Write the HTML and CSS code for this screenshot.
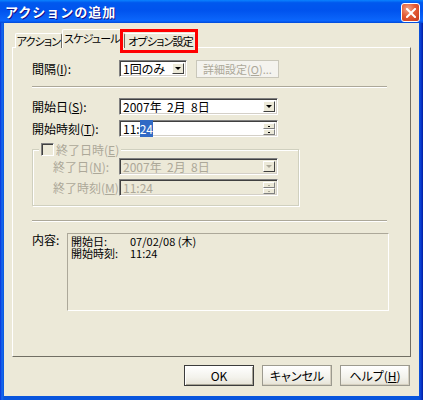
FILE: index.html
```html
<!DOCTYPE html>
<html lang="ja">
<head>
<meta charset="utf-8">
<title>アクションの追加</title>
<link rel="stylesheet" href="styles.css">
</head>
<body>
<div class="window">
  <div class="titlebar">
    <span class="title">アクションの追加</span>
    <span class="close">
      <svg width="10" height="10" viewBox="0 0 10 10"><path d="M1 1 L9 9 M9 1 L1 9" stroke="#fff" stroke-width="2" stroke-linecap="square"/></svg>
    </span>
  </div>
  <div class="client">
    <div class="tabs">
      <div class="tab t1">アクション</div>
      <div class="tab sel">スケジュール</div>
      <div class="tab t3">オプション設定<span class="mark"></span></div>
    </div>
    <div class="panel">
      <div class="row r1">
        <span class="lbl">間隔(<u>I</u>):</span>
        <div class="field interval">1回のみ<span class="dd"><i class="tri"></i></span></div>
        <span class="btn small dis">詳細設定(<u>O</u>)...</span>
      </div>
      <div class="sep s1"></div>
      <div class="row r2">
        <span class="lbl">開始日(<u>S</u>):</span>
        <div class="field wide">2007年&nbsp; 2月&nbsp; 8日<span class="dd"><i class="tri"></i></span></div>
      </div>
      <div class="row r3">
        <span class="lbl">開始時刻(<u>T</u>):</span>
        <div class="field wide">11:<span class="hl">24</span><span class="spin"><span class="sb"><i class="dot"></i></span><span class="sb"><i class="dot"></i></span></span></div>
      </div>
      <div class="group">
        <div class="legend"><span class="cb"></span><span class="gray">終了日時(<u>E</u>)</span></div>
        <div class="row g1">
          <span class="lbl glbl gray">終了日(<u>N</u>):</span>
          <div class="field wide disf">2007年&nbsp; 2月&nbsp; 8日<span class="dd"><i class="tri dtri"></i></span></div>
        </div>
        <div class="row g2">
          <span class="lbl glbl gray">終了時刻(<u>M</u>):</span>
          <div class="field wide disf">11:24<span class="spin"><span class="sb"><i class="dot ddot"></i></span><span class="sb"><i class="dot ddot"></i></span></span></div>
        </div>
      </div>
      <div class="sep s2"></div>
      <div class="row r4">
        <span class="lbl top">内容:</span>
        <div class="content">
          <span>開始日:</span><span>07/02/08 (木)</span>
          <span>開始時刻:</span><span>11:24</span>
        </div>
      </div>
    </div>
    <div class="buttons">
      <span class="btn big ok">OK</span>
      <span class="btn big">キャンセル</span>
      <span class="btn big">ヘルプ(<u>H</u>)</span>
    </div>
  </div>
</div>
</body>
</html>
```
FILE: styles.css
```css
html, body {
  margin: 0;
  padding: 0;
  background: #ffffff;
}
body {
  font-family: "Noto Sans CJK JP", "DejaVu Sans", sans-serif;
  font-size: 12px;
  font-feature-settings: "palt";
  color: #000;
}
u { text-decoration: underline; text-underline-offset: 1px; }

.window {
  width: 423px;
  height: 400px;
  display: flex;
  flex-direction: column;
  background: linear-gradient(to right, #0831D9 0, #166AEE 2px, #0855DD 4px, #0855DD 419px, #0A3ACF 421px, #001EA0 423px);
  overflow: hidden;
}
.titlebar {
  height: 23px;
  flex: none;
  display: flex;
  align-items: center;
  justify-content: space-between;
  padding: 0 3px 0 5px;
  background: linear-gradient(to bottom, #0A83FF 0%, #0058EE 12%, #0053EE 45%, #0962F8 80%, #0A66FF 90%, #0049D8 100%);
}
.title {
  color: #fff;
  font-weight: bold;
  font-size: 13px;
  line-height: 15px;
  font-feature-settings: normal;
  text-shadow: 1px 1px #0F1089;
  letter-spacing: 1px;
}
.close {
  width: 17px;
  height: 17px;
  margin-top: 2px;
  border: 1px solid #fff;
  border-radius: 3px;
  background: radial-gradient(circle at 35% 30%, #F2A58A 0%, #E35B35 45%, #C8381A 100%);
  display: flex;
  align-items: center;
  justify-content: center;
}

.client {
  flex: 1;
  margin: 0 4px 4px 4px;
  background: #ECE9D8;
  padding: 7px 8px 0 8px;
  display: flex;
  flex-direction: column;
}

.tabs {
  position: relative;
  display: flex;
  align-items: flex-end;
  height: 18px;
  margin-bottom: -1px;
  z-index: 1;
}
.tab {
  height: 15px;
  line-height: 14px;
  font-size: 11px;
  letter-spacing: -0.8px;
  background: #ECE9D8;
  border-top: 1px solid #fff;
  border-left: 1px solid #fff;
  border-right: 1px solid #716F64;
  border-radius: 2px 2px 0 0;
  box-sizing: border-box;
  white-space: nowrap;
  text-align: center;
  padding: 0;
}
.tab.t1 { margin-left: 3px; width: 47px; }
.tab.sel { height: 19px; line-height: 17px; width: 60px; border-right: 1px solid #ECE9D8; }
.tab.t3 { position: relative; margin-left: 2px; width: 74px; border-left: 1px solid #6B6A60; border-right: 2px solid #6B6A60; }
.mark {
  position: absolute;
  left: -5px;
  top: -5px;
  width: 72px;
  height: 18px;
  border: 3px solid #FF0000;
}

.panel {
  height: 310px;
  box-sizing: border-box;
  border-top: 1px solid #fff;
  border-left: 1px solid #fff;
  border-right: 1px solid #716F64;
  border-bottom: 1px solid #716F64;
  padding: 12px 0 0 19px;
  background: #ECE9D8;
}

.row {
  display: flex;
  align-items: center;
  height: 17px;
}
.lbl {
  width: 87px;
  flex: none;
  line-height: 14px;
  white-space: nowrap;
}
.field {
  position: relative;
  height: 17px;
  box-sizing: border-box;
  background: #fff;
  border-top: 1px solid #808080;
  border-left: 1px solid #808080;
  border-right: 1px solid #fff;
  border-bottom: 1px solid #fff;
  box-shadow: inset 1px 1px 0 #404040, inset -1px -1px 0 #D4D0C8;
  padding-left: 3px;
  line-height: 15px;
  white-space: nowrap;
  font-size: 12px;
}
.field.interval { width: 68px; }
.field.wide { width: 159px; }
.field.disf { background: #ECE9D8; color: #ACA899; }
.dd {
  position: absolute;
  right: 2px;
  top: 2px;
  width: 12px;
  height: 11px;
  background: #ECE9D8;
  border-top: 1px solid #fff;
  border-left: 1px solid #fff;
  border-right: 1px solid #404040;
  border-bottom: 1px solid #404040;
  box-sizing: border-box;
  display: flex;
  align-items: center;
  justify-content: center;
}
.tri {
  width: 0;
  height: 0;
  border-left: 3px solid transparent;
  border-right: 3px solid transparent;
  border-top: 3px solid #000;
}
.tri.dtri { border-top-color: #ACA899; }
.spin {
  position: absolute;
  right: 2px;
  top: 2px;
  width: 12px;
  height: 12px;
  display: flex;
  flex-direction: column;
}
.sb {
  flex: 1;
  background: #ECE9D8;
  border-top: 1px solid #fff;
  border-left: 1px solid #fff;
  border-right: 1px solid #808080;
  border-bottom: 1px solid #808080;
  display: flex;
  align-items: center;
  justify-content: center;
}
.dot { width: 2px; height: 1px; background: #000; }
.dot.ddot { background: #ACA899; }
.hl { background: #316AC5; color: #fff; }

.btn {
  display: inline-flex;
  align-items: center;
  justify-content: center;
  box-sizing: border-box;
  white-space: nowrap;
  background: linear-gradient(to bottom, #FFFFFF 0%, #F3F2EC 60%, #E6E3D6 100%);
  border: 1px solid #9C9A8F;
  box-shadow: inset -1px -1px 0 #D6D0C0;
  font-size: 12px;
}
.btn.small { width: 83px; height: 18px; margin-left: 9px; font-size: 11px; }
.btn.dis { color: #ACA899; background: #F4F3EE; border-color: #C9C7BA; box-shadow: none; }

.sep {
  width: 355px;
  height: 0;
  border-top: 1px solid #ACA899;
  border-bottom: 1px solid #fff;
}
.sep.s1 { margin-top: 9px; margin-bottom: 10px; }
.r3 { margin-top: 5px; }

.group {
  position: relative;
  width: 267px;
  height: 57px;
  box-sizing: border-box;
  margin-top: 12px;
  border: 1px solid #D0D0BF;
  box-shadow: inset 1px 1px 0 #fff, 1px 1px 0 #fff;
  padding: 8px 0 0 20px;
}
.legend {
  position: absolute;
  left: 6px;
  top: -7px;
  display: flex;
  align-items: center;
  background: #ECE9D8;
  padding: 0 2px;
  line-height: 13px;
}
.cb {
  width: 11px;
  height: 11px;
  margin-right: 2px;
  border-top: 1px solid #808080;
  border-left: 1px solid #808080;
  border-right: 1px solid #fff;
  border-bottom: 1px solid #fff;
  box-shadow: inset 1px 1px 0 #404040;
  background: #ECE9D8;
}
.gray { color: #ACA899; }
.glbl { width: 66px; }
.g2 { margin-top: 4px; }

.sep.s2 { margin-top: 14px; }
.r4 { margin-top: 11px; height: auto; align-items: flex-start; }
.r4 .lbl { width: 35px; }
.content {
  width: 322px;
  height: 78px;
  box-sizing: border-box;
  border-top: 1px solid #ACA899;
  border-left: 1px solid #ACA899;
  border-right: 1px solid #fff;
  border-bottom: 1px solid #fff;
  padding: 1px 0 0 3px;
  display: grid;
  grid-template-columns: 59px auto;
  grid-auto-rows: 12px;
  align-content: start;
  line-height: 12px;
  font-size: 11px;
}

.buttons {
  display: flex;
  justify-content: flex-end;
  gap: 8px;
  margin-top: 8px;
  padding-right: 1px;
}
.btn.big { width: 70px; height: 21px; }
.btn.ok { border: 1px solid #3C3C3C; box-shadow: inset 1px 1px 0 #fff, inset -1px -1px 0 #A8A596; }
```
